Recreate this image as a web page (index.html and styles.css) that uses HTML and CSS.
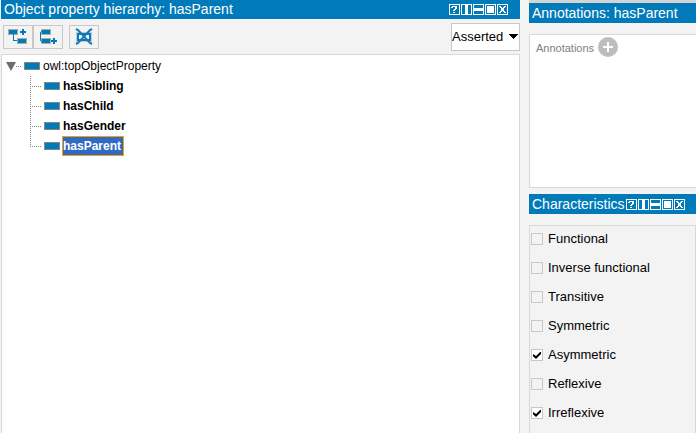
FILE: index.html
```html
<!DOCTYPE html>
<html lang="en">
<head>
<meta charset="utf-8">
<title>Object properties</title>
<link rel="stylesheet" href="styles.css">
</head>
<body>
<svg class="defs" aria-hidden="true">
  <symbol id="help" viewBox="0 0 11 11"><path class="frame" d="M.5.5h10v10H.5z"/><path class="solid" d="M3 2h5v1H3zM2 3h2v1H2zM6 3h2v2H6zM5 5h2v1H5zM4 6h2v1H4zM4 8h2v1H4z"/></symbol>
  <symbol id="split-v" viewBox="0 0 11 11"><path class="frame" d="M.5.5h10v10H.5z"/><path class="solid" d="M4 1h3v9H4z"/></symbol>
  <symbol id="split-h" viewBox="0 0 11 11"><path class="frame" d="M.5.5h10v10H.5z"/><path class="solid" d="M1 4h9v3H1z"/></symbol>
  <symbol id="float" viewBox="0 0 11 11"><path class="frame" d="M.5.5h10v10H.5z"/><path class="solid" d="M2 2h7v7H2z"/></symbol>
  <symbol id="close" viewBox="0 0 11 11"><path class="frame" d="M.5.5h10v10H.5z"/><path class="solid" d="M2 2h2v1H2zM7 2h2v1H7zM3 3h2v1H3zM6 3h2v1H6zM4 4h3v3H4zM3 7h2v1H3zM6 7h2v1H6zM2 8h2v1H2zM7 8h2v1H7z"/></symbol>
</svg>
<main class="workspace">
  <section class="panel">
    <header class="titlebar">
      <h2>Object property hierarchy: hasParent</h2>
      <div class="controls">
        <button aria-label="Help"><svg><use href="#help"/></svg></button>
        <button aria-label="Split vertically"><svg><use href="#split-v"/></svg></button>
        <button aria-label="Split horizontally"><svg><use href="#split-h"/></svg></button>
        <button aria-label="Float"><svg><use href="#float"/></svg></button>
        <button aria-label="Close"><svg><use href="#close"/></svg></button>
      </div>
    </header>
    <div class="toolbar">
      <div class="group">
        <button class="tool" aria-label="Add sub property"><svg viewBox="0 0 30 24">
          <path class="edge" d="M5 4h10v6H5zM14 13h10v6H14z"/><path class="blue" d="M6 5h8v4H6zM15 14h8v4h-8zM10 9h1v7h-1zM10 15h4v1h-4zM19 4h2v2h2v2h-2v2h-2V8h-2V6h2z"/></svg></button>
        <button class="tool" aria-label="Add sibling property"><svg viewBox="0 0 30 24">
          <path class="edge" d="M8 4h10v6H8zM8 13h10v6H8z"/><path class="blue" d="M9 5h8v4H9zM9 14h8v4H9zM8 6h1v1H8v9h1v1H8v-1H7V7h1zM20 13h2v2h2v2h-2v2h-2v-2h-2v-2h2z"/></svg></button>
      </div>
      <button class="tool" aria-label="Delete selected property"><svg viewBox="0 0 30 24">
        <path class="halo" d="M7.5 7.500h15v9h-15z"/><path class="cross" d="M9 9h12v6H9z"/><path class="cross" d="M7 4l2 1 12 13 2 1M23 4l-2 1L9 18l-2 1"/></svg></button>
      <label class="mode"><select aria-label="Hierarchy mode"><option>Asserted</option><option>Inferred</option></select><svg viewBox="0 0 9 5"><path d="M0 0h9v1H8v1H7v1H6v1H5v1H4V4H3V3H2V2H1V1H0z"/></svg></label>
    </div>
    <div class="tree">
      <div class="node root"><svg class="twisty" viewBox="0 0 10 9"><path d="M0 0h10L5 9z"/></svg><i class="dots"></i><i class="property"></i><span class="name">owl:topObjectProperty</span></div>
      <ul>
        <li class="node"><i class="dots"></i><i class="property"></i><span class="name">hasSibling</span></li>
        <li class="node"><i class="dots"></i><i class="property"></i><span class="name">hasChild</span></li>
        <li class="node"><i class="dots"></i><i class="property"></i><span class="name">hasGender</span></li>
        <li class="node"><i class="dots"></i><i class="property"></i><span class="name selected">hasParent</span></li>
      </ul>
    </div>
  </section>
  <aside class="side">
    <section class="panel annotations">
      <header class="titlebar"><h2>Annotations: hasParent</h2></header>
      <div class="box">
        <span>Annotations</span>
        <button class="add" aria-label="Add annotation"><svg viewBox="0 0 20 20"><circle cx="10" cy="10" r="10"/><path d="M9 5h2v4h4v2h-4v4H9v-4H5V9h4z"/></svg></button>
      </div>
    </section>
    <section class="panel characteristics">
      <header class="titlebar">
        <h2>Characteristics</h2>
        <div class="controls">
          <button aria-label="Help"><svg><use href="#help"/></svg></button>
          <button aria-label="Split vertically"><svg><use href="#split-v"/></svg></button>
          <button aria-label="Split horizontally"><svg><use href="#split-h"/></svg></button>
          <button aria-label="Float"><svg><use href="#float"/></svg></button>
          <button aria-label="Close"><svg><use href="#close"/></svg></button>
        </div>
      </header>
      <div class="checks">
        <label><input type="checkbox">Functional</label>
        <label><input type="checkbox">Inverse functional</label>
        <label><input type="checkbox">Transitive</label>
        <label><input type="checkbox">Symmetric</label>
        <label><input type="checkbox" checked>Asymmetric</label>
        <label><input type="checkbox">Reflexive</label>
        <label><input type="checkbox" checked>Irreflexive</label>
      </div>
    </section>
  </aside>
</main>
</body>
</html>
```
FILE: styles.css
```css
* { box-sizing: border-box; }
body {
  margin: 0;
  background: #f3f3f3;
  color: #000;
  font: 12px/20px "Liberation Sans", Arial, sans-serif;
}
button { padding: 0; border: 0; background: none; }
svg { display: block; }
.defs { position: absolute; width: 0; height: 0; }

.workspace {
  display: grid;
  grid-template-columns: minmax(0, 1fr) minmax(167px, 24%);
  gap: 9px;
  min-height: 100vh;
  padding-left: 1px;
}
.panel { display: flex; flex-direction: column; min-width: 0; }

.titlebar {
  display: flex;
  align-items: center;
  height: 19px;
  padding: 0 12px 1px 3px;
  background: #007ab9;
  color: #fff;
}
.titlebar h2 {
  flex: 1;
  min-width: 0;
  margin: 0;
  overflow: hidden;
  white-space: nowrap;
  font-size: 14px;
  font-weight: 400;
  line-height: 18px;
}
.controls { display: flex; gap: 1px; }
.controls svg { width: 11px; height: 11px; shape-rendering: crispEdges; }
.frame { fill: none; stroke: #fff; }
.solid { fill: #fff; }

.toolbar {
  display: flex;
  align-items: center;
  gap: 6px;
  height: 35px;
  padding-left: 2px;
}
.group { display: flex; }
.tool { display: flex; width: 30px; height: 24px; border: 1px solid #c8c8c8; }
.tool svg {
  flex: none;
  width: 30px;
  height: 24px;
  margin: -1px;
  shape-rendering: crispEdges;
}
.edge { fill: #aaa; }
.blue { fill: #007ab9; }
.halo { fill: none; stroke: #b4cfdf; }
.cross { fill: none; stroke: #1478b4; stroke-width: 2; shape-rendering: auto; }
.mode {
  display: flex;
  align-items: center;
  justify-content: space-between;
  width: 69px;
  height: 28px;
  margin-left: auto;
  padding-right: 1px;
  border: 1px solid #c8c8c8;
  background: #fff;
}
.mode select {
  flex: 1;
  min-width: 0;
  height: 26px;
  padding: 0;
  border: 0;
  appearance: none;
  background: none;
  color: #000;
  font: 13px "Liberation Sans", Arial, sans-serif;
}
.mode svg { width: 9px; height: 5px; shape-rendering: crispEdges; }

.tree {
  flex: 1;
  padding: 1px 0 0 4px;
  border: 1px solid #d9d9d9;
  border-bottom: 0;
  background: #fff;
}
.tree ul {
  margin: 0 0 0 24px;
  padding: 0;
  list-style: none;
  font-weight: 700;
  background: linear-gradient(#888 50%, transparent 50%) 0 0 / 1px 2px repeat-y;
}
.node { display: flex; align-items: center; height: 20px; }
.tree li:last-child { background: linear-gradient(#fff, #fff) 0 11px / 1px 9px no-repeat; }
.twisty { width: 10px; height: 9px; fill: #6d6d6d; }
.dots {
  width: 12px;
  height: 1px;
  background: repeating-linear-gradient(90deg, #888 0 1px, transparent 1px 2px);
}
.root .dots { width: 6px; }
.property {
  width: 16px;
  height: 8px;
  margin: 0 2px;
  border: 1px solid #868686;
  background: #007ab9;
}
.name { padding: 0 2px 0 1px; }
.selected {
  padding: 0 2px 0 0;
  border: 1px solid #f5a100;
  background: #316ac5;
  color: #fff;
  line-height: 18px;
}

.side { display: flex; flex-direction: column; gap: 6px; min-width: 0; }
.side .titlebar { height: 20px; padding: 0 11px 0 3px; }
.annotations { border-top: 3px solid #d4d4d4; }
.box {
  display: flex;
  align-items: flex-start;
  gap: 4px;
  min-height: 154px;
  margin-top: 11px;
  padding: 2px 6px;
  border: 1px solid #d9d9d9;
  border-right: 0;
  background: #fff;
  color: #808080;
  font-size: 11px;
  line-height: 22px;
}
.add svg { width: 20px; height: 20px; fill: #bdbdbd; }
.add path { fill: #fff; }
.characteristics { flex: 1; }
.checks {
  flex: 1;
  display: flex;
  flex-direction: column;
  gap: 9px;
  margin-top: 11px;
  padding: 3px 1px 0;
  border: 1px solid #d9d9d9;
  border-bottom: 0;
}
.checks label { display: flex; align-items: center; gap: 5px; font-size: 13px; }
.checks input {
  width: 12px;
  height: 12px;
  margin: 0;
  border: 1px solid #c8c8c8;
  appearance: none;
}
.checks input:checked { background: #fff; }
.checks input:checked::before {
  content: "";
  display: block;
  width: 8px;
  height: 8px;
  margin: 1px;
  background: #000;
  clip-path: polygon(0 38%, 38% 62%, 88% 12%, 100% 12%, 100% 38%, 38% 100%, 0 65%);
}
```
